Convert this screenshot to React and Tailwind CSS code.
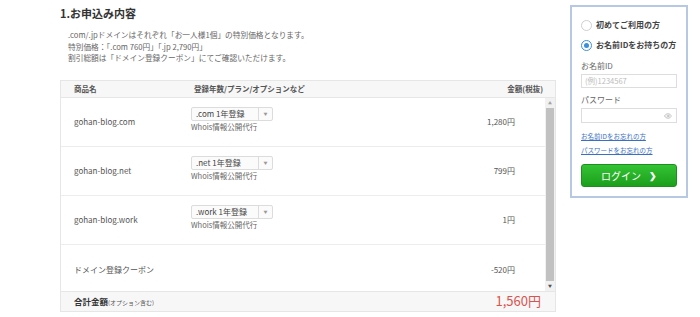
import { Eye } from 'lucide-react';

const font = { fontFamily: '"Noto Sans CJK JP", "Noto Sans", sans-serif' };

const rows = [
  { name: 'gohan-blog.com', plan: '.com 1年登録', price: '1,280円' },
  { name: 'gohan-blog.net', plan: '.net 1年登録', price: '799円' },
  { name: 'gohan-blog.work', plan: '.work 1年登録', price: '1円' },
];

const PlanSelect = ({ label }) => (
  <div className="flex h-[14px] w-[82px] border border-[#dcdcdc] rounded-[2px] bg-[#fbfbfb] text-[8px] leading-[12px] text-[#444]">
    <div className="w-[66px] pl-[4px] whitespace-nowrap">{label}</div>
    <div className="flex-1 border-l border-[#dcdcdc] flex items-center justify-center text-[4px] text-[#999]">▼</div>
  </div>
);

const Radio = ({ checked, label }) => (
  <div className="flex items-center gap-[4px] h-[12px]">
    <div
      className={
        checked
          ? 'shrink-0 w-[11px] h-[11px] rounded-full border-[1.5px] border-[#3b8fd9] bg-white flex items-center justify-center'
          : 'shrink-0 w-[11px] h-[11px] rounded-full border border-[#cfcfcf] bg-white'
      }
    >
      {checked && <div className="w-[5px] h-[5px] rounded-full bg-[#3b8fd9]" />}
    </div>
    <span className="whitespace-nowrap text-[8px] font-bold text-[#444]">{label}</span>
  </div>
);

export default function App() {
  return (
    <div className="w-[700px] h-[317px] bg-white flex overflow-hidden text-[#555]" style={font}>
      {/* left column */}
      <div className="ml-[60px] w-[496px] flex flex-col">
        <h2 className="mt-[6px] text-[11px] leading-[14px] font-bold text-[#333]">1.お申込み内容</h2>
        <div className="mt-[9px] ml-[8px] text-[7.7px] leading-[11.5px] text-[#666]">
          <p>.com/.jpドメインはそれぞれ「お一人様1個」の特別価格となります。</p>
          <p>特別価格：「.com 760円」「.jp 2,790円」</p>
          <p>割引総額は「ドメイン登録クーポン」にてご確認いただけます。</p>
        </div>

        <div className="mt-[16px] border border-[#e6e6e6] flex flex-col">
          {/* header */}
          <div className="h-[17px] bg-[#f7f7f7] border-b border-[#e6e6e6] flex items-center text-[7.5px] font-bold text-[#555]">
            <div className="w-[133px] pl-[13px]">商品名</div>
            <div className="flex-1">登録年数/プラン/オプションなど</div>
            <div className="pr-[12px]">金額(税抜)</div>
          </div>

          {/* scroll body */}
          <div className="h-[193px] flex">
            <div className="flex-1 flex flex-col">
              {rows.map((r) => (
                <div key={r.name} className="h-[49px] border-b border-[#ededed] flex text-[8px] text-[#555]">
                  <div className="w-[130px] pl-[13px] flex items-center pt-[1px]">{r.name}</div>
                  <div className="flex-1 pt-[9px]">
                    <PlanSelect label={r.plan} />
                    <div className="mt-[1px] text-[7.5px] leading-[10px] text-[#666]">Whois情報公開代行</div>
                  </div>
                  <div className="pr-[30px] flex items-center pt-[1px]">{r.price}</div>
                </div>
              ))}
              <div className="flex-1 flex items-center text-[8px] text-[#555] pt-[4px]">
                <div className="flex-1 pl-[13px]">ドメイン登録クーポン</div>
                <div className="pr-[30px]">-520円</div>
              </div>
            </div>
            {/* scrollbar */}
            <div className="w-[10px] bg-[#f1f1f1] flex flex-col items-center">
              <div className="h-[10px] flex items-center justify-center text-[4px] text-[#a3a3a3]">▲</div>
              <div className="flex-1 w-[8px] bg-[#c1c1c1]" />
              <div className="h-[10px] flex items-center justify-center text-[4px] text-[#505050]">▼</div>
            </div>
          </div>

          {/* total */}
          <div className="h-[20px] bg-[#f7f7f7] border-t border-[#e6e6e6] flex items-center">
            <div className="flex-1 pl-[13px] text-[8.5px] font-bold text-[#333]">
              合計金額<span className="text-[6px] font-normal text-[#555]">(オプション含む)</span>
            </div>
            <div className="pr-[14px] text-[13px] leading-[16px] text-[#d9534f]">1,560円</div>
          </div>
        </div>
      </div>

      {/* right login panel */}
      <div className="ml-[14px] mt-[5px] w-[118px] h-[193px] border-2 border-[#b7c9e2] bg-white flex flex-col px-[9px]">
        <div className="mt-[12px] flex flex-col gap-[8px]">
          <Radio label="初めてご利用の方" />
          <Radio checked label="お名前IDをお持ちの方" />
        </div>
        <div className="mt-[10px] text-[8px] leading-[10px] text-[#666]">お名前ID</div>
        <div className="mt-[3px] h-[14px] border border-[#ddd] text-[7.5px] leading-[12px] text-[#bbb] pl-[3px]">(例)1234567</div>
        <div className="mt-[7px] text-[8px] leading-[10px] text-[#666]">パスワード</div>
        <div className="mt-[3px] h-[15px] border border-[#ddd] flex items-center justify-end pr-[4px]">
          <Eye size={8} className="text-[#aaa]" />
        </div>
        <a className="mt-[8px] text-[6.5px] leading-[10px] text-[#3a6fc4] underline">お名前IDをお忘れの方</a>
        <a className="mt-[4px] text-[6.5px] leading-[10px] text-[#3a6fc4] underline">パスワードをお忘れの方</a>
        <button className="mt-[9px] h-[23px] rounded-[3px] border border-[#1e8e1e] bg-gradient-to-b from-[#33c333] to-[#1c9f1c] text-white text-[10px] flex items-center justify-center gap-[8px]">
          <span>ログイン</span>
          <span className="text-[9px] font-bold">❯</span>
        </button>
      </div>
    </div>
  );
}
